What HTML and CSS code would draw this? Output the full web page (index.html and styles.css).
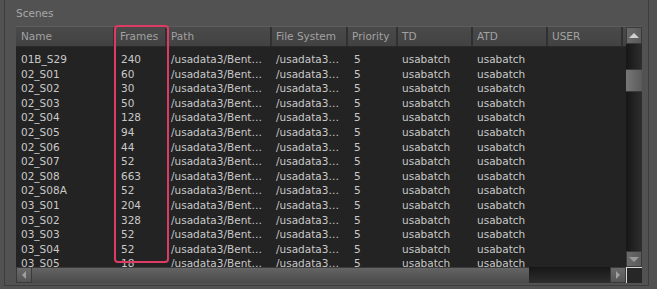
FILE: index.html
```html
<!DOCTYPE html>
<html lang="en">
<head>
<meta charset="UTF-8">
<meta name="viewport" content="width=device-width, initial-scale=1.0">
<title>Scenes</title>
<link rel="stylesheet" href="styles.css">
</head>
<body>
    <div class="panel">
        <div class="panel-title">Scenes</div>

        <div class="scroll-view">
            <div class="table">
                <div class="row head">
                    <div class="cell first">Name</div>
                    <div class="cell first">Frames</div>
                    <div class="cell">Path</div>
                    <div class="cell">File System</div>
                    <div class="cell">Priority</div>
                    <div class="cell">TD</div>
                    <div class="cell">ATD</div>
                    <div class="cell">USER</div>
                </div>
                <div class="body">
                    <div class="row"><div class="cell first">01B_S29</div><div class="cell num">240</div><div class="cell">/usadata3/Bent…</div><div class="cell">/usadata3…</div><div class="cell num">5</div><div class="cell">usabatch</div><div class="cell">usabatch</div><div class="cell"></div></div>
                    <div class="row"><div class="cell first">02_S01</div><div class="cell num">60</div><div class="cell">/usadata3/Bent…</div><div class="cell">/usadata3…</div><div class="cell num">5</div><div class="cell">usabatch</div><div class="cell">usabatch</div><div class="cell"></div></div>
                    <div class="row"><div class="cell first">02_S02</div><div class="cell num">30</div><div class="cell">/usadata3/Bent…</div><div class="cell">/usadata3…</div><div class="cell num">5</div><div class="cell">usabatch</div><div class="cell">usabatch</div><div class="cell"></div></div>
                    <div class="row"><div class="cell first">02_S03</div><div class="cell num">50</div><div class="cell">/usadata3/Bent…</div><div class="cell">/usadata3…</div><div class="cell num">5</div><div class="cell">usabatch</div><div class="cell">usabatch</div><div class="cell"></div></div>
                    <div class="row"><div class="cell first">02_S04</div><div class="cell num">128</div><div class="cell">/usadata3/Bent…</div><div class="cell">/usadata3…</div><div class="cell num">5</div><div class="cell">usabatch</div><div class="cell">usabatch</div><div class="cell"></div></div>
                    <div class="row"><div class="cell first">02_S05</div><div class="cell num">94</div><div class="cell">/usadata3/Bent…</div><div class="cell">/usadata3…</div><div class="cell num">5</div><div class="cell">usabatch</div><div class="cell">usabatch</div><div class="cell"></div></div>
                    <div class="row"><div class="cell first">02_S06</div><div class="cell num">44</div><div class="cell">/usadata3/Bent…</div><div class="cell">/usadata3…</div><div class="cell num">5</div><div class="cell">usabatch</div><div class="cell">usabatch</div><div class="cell"></div></div>
                    <div class="row"><div class="cell first">02_S07</div><div class="cell num">52</div><div class="cell">/usadata3/Bent…</div><div class="cell">/usadata3…</div><div class="cell num">5</div><div class="cell">usabatch</div><div class="cell">usabatch</div><div class="cell"></div></div>
                    <div class="row"><div class="cell first">02_S08</div><div class="cell num">663</div><div class="cell">/usadata3/Bent…</div><div class="cell">/usadata3…</div><div class="cell num">5</div><div class="cell">usabatch</div><div class="cell">usabatch</div><div class="cell"></div></div>
                    <div class="row"><div class="cell first">02_S08A</div><div class="cell num">52</div><div class="cell">/usadata3/Bent…</div><div class="cell">/usadata3…</div><div class="cell num">5</div><div class="cell">usabatch</div><div class="cell">usabatch</div><div class="cell"></div></div>
                    <div class="row"><div class="cell first">03_S01</div><div class="cell num">204</div><div class="cell">/usadata3/Bent…</div><div class="cell">/usadata3…</div><div class="cell num">5</div><div class="cell">usabatch</div><div class="cell">usabatch</div><div class="cell"></div></div>
                    <div class="row"><div class="cell first">03_S02</div><div class="cell num">328</div><div class="cell">/usadata3/Bent…</div><div class="cell">/usadata3…</div><div class="cell num">5</div><div class="cell">usabatch</div><div class="cell">usabatch</div><div class="cell"></div></div>
                    <div class="row"><div class="cell first">03_S03</div><div class="cell num">52</div><div class="cell">/usadata3/Bent…</div><div class="cell">/usadata3…</div><div class="cell num">5</div><div class="cell">usabatch</div><div class="cell">usabatch</div><div class="cell"></div></div>
                    <div class="row"><div class="cell first">03_S04</div><div class="cell num">52</div><div class="cell">/usadata3/Bent…</div><div class="cell">/usadata3…</div><div class="cell num">5</div><div class="cell">usabatch</div><div class="cell">usabatch</div><div class="cell"></div></div>
                    <div class="row"><div class="cell first">03_S05</div><div class="cell num">18</div><div class="cell">/usadata3/Bent…</div><div class="cell">/usadata3…</div><div class="cell num">5</div><div class="cell">usabatch</div><div class="cell">usabatch</div><div class="cell"></div></div>
                </div>
            </div>

            <div class="vscroll">
                <div class="sb-btn up"><span class="arrow-up"></span></div>
                <div class="sb-track">
                    <div class="sb-thumb-v"></div>
                </div>
                <div class="sb-btn down"><span class="arrow-down"></span></div>
            </div>

            <div class="hscroll">
                <div class="sb-btn left"><span class="arrow-left"></span></div>
                <div class="sb-thumb-h"></div>
                <div class="sb-track-h"></div>
                <div class="sb-btn right"><span class="arrow-right"></span></div>
            </div>

            <div class="corner"></div>

            <div class="highlight"></div>
        </div>
    </div>
</body>
</html>
```

FILE: styles.css
```css
body {
    margin: 0;
    background-color: #525252;
    font-family: "DejaVu Sans", Verdana, sans-serif;
    font-size: 10.5px;
}
.panel {
    margin-left: 4px;
    width: 645px;
    height: 286px;
    border-left: 1px solid #3d3d3d;
    border-right: 1px solid #3d3d3d;
    border-bottom: 1px solid #3d3d3d;
    box-sizing: border-box;
    padding: 7px 0 0 11px;
}
.panel-title {
    color: #a8a8a8;
    height: 13px;
    line-height: 13px;
    padding-left: 0;
    margin-bottom: 6px;
}
.scroll-view {
    position: relative;
    display: grid;
    grid-template-columns: 610px 16px;
    grid-template-rows: 240px 16px;
    width: 626px;
    border-top: 1px solid #5c5c5c;
}
.table {
    background-color: #232323;
    overflow: hidden;
    color: #c9c9c9;
}
.row {
    display: grid;
    grid-template-columns: 99px 52px 105px 76px 50px 75px 75px 75px;
    height: 14.6px;
    line-height: 14.6px;
}
.row.head {
    height: 19px;
    line-height: 19px;
    background: linear-gradient(#4a4a4a, #424242);
    border-bottom: 1px solid #2a2a2a;
    color: #a2a2a2;
}
.row.head .cell {
    border-right: 2px solid #303030;
}
.body {
    padding-top: 5px;
}
.cell {
    padding-left: 4px;
    white-space: nowrap;
    overflow: hidden;
}
.cell.first {
    padding-left: 5px;
}
.cell.num {
    padding-left: 6px;
}

.vscroll {
    display: flex;
    flex-direction: column;
    background: #1e1e1e;
}
.sb-btn {
    display: flex;
    align-items: center;
    justify-content: center;
    background: linear-gradient(90deg, #6a6a6a, #5a5a5a);
    border: 1px solid #3a3a3a;
    box-sizing: border-box;
}
.sb-btn.up {
    height: 17px;
}
.sb-btn.down {
    height: 16px;
}
.sb-track {
    flex: 1;
    padding-top: 25px;
    background: linear-gradient(90deg, #161616, #2e2e2e);
}
.sb-thumb-v {
    height: 21px;
    background: linear-gradient(90deg, #777777, #5a5a5a);
    border-top: 1px solid #3a3a3a;
    border-bottom: 1px solid #3a3a3a;
}

.hscroll {
    display: flex;
    background: #2a2a2a;
}
.sb-btn.left, .sb-btn.right {
    width: 16px;
    background: linear-gradient(#6a6a6a, #555555);
}
.sb-thumb-h {
    width: 497px;
    background: linear-gradient(#646464, #4a4a4a);
    border-top: 1px solid #3a3a3a;
}
.sb-track-h {
    flex: 1;
    background: linear-gradient(#171717, #2e2e2e);
}
.corner {
    background: #272727;
    border-top: 1px solid #d8d8d8;
    border-left: 1px solid #d8d8d8;
}

.arrow-up {
    border-left: 5px solid transparent;
    border-right: 5px solid transparent;
    border-bottom: 5px solid #d0d0d0;
}
.arrow-down {
    border-left: 5px solid transparent;
    border-right: 5px solid transparent;
    border-top: 5px solid #9a9a9a;
}
.arrow-left {
    border-top: 4px solid transparent;
    border-bottom: 4px solid transparent;
    border-right: 4px solid #a0a0a0;
}
.arrow-right {
    border-top: 4px solid transparent;
    border-bottom: 4px solid transparent;
    border-left: 4px solid #a0a0a0;
}

.highlight {
    position: absolute;
    left: 98px;
    top: -2px;
    width: 51px;
    height: 234px;
    border: 2px solid #dd3b63;
    border-radius: 4px;
}
```
